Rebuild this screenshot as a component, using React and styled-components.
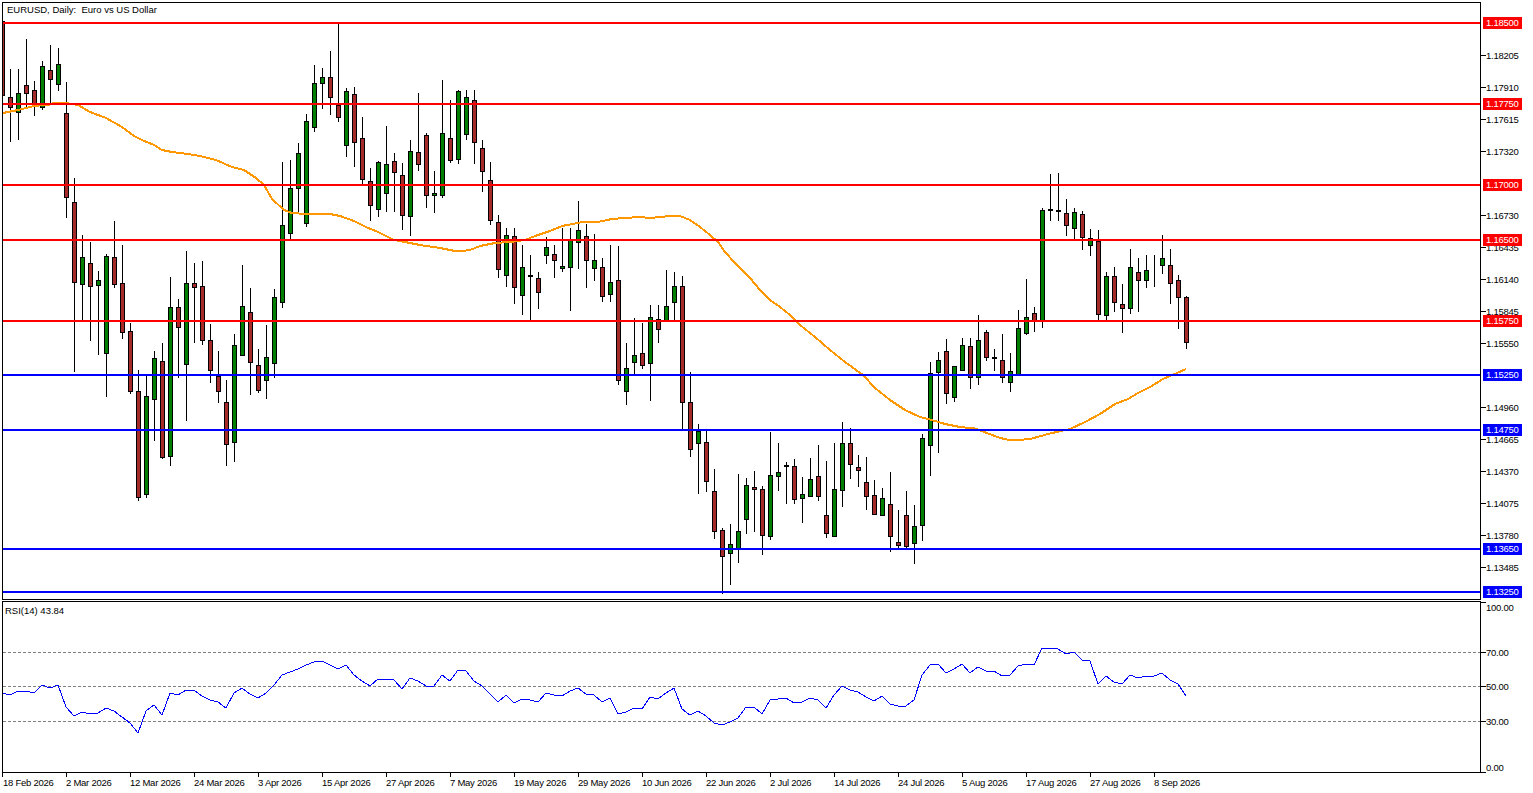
import React from 'react'
import styled, { createGlobalStyle } from 'styled-components'

const GlobalStyle = createGlobalStyle`
  html, body {
    margin: 0;
    padding: 0;
    background: #fff;
  }
`

const Terminal = styled.div`
  width: 1533px;
  height: 793px;
  box-sizing: border-box;
  padding: 2px 0 0 2px;
  overflow: hidden;
  background: #fff;
  color: #000;
  font-family: "Liberation Sans", Arial, sans-serif;
  font-size: 9.5px;
  letter-spacing: -0.25px;
  line-height: 12px;
`

const ChartRow = styled.div`
  display: flex;
  height: ${p => p.$height}px;
  margin-top: ${p => p.$gap || 0}px;
`

const Panel = styled.div`
  position: relative;
  width: 1479px;
  box-sizing: border-box;
  border: 1px solid #000;
  overflow: hidden;
`

const PlotSvg = styled.svg`
  display: block;
  width: 100%;
  height: 100%;
`

const PanelTitle = styled.div`
  position: absolute;
  left: ${p => p.$left}px;
  top: ${p => p.$top}px;
  letter-spacing: 0;
  white-space: pre;
`

const PriceAxis = styled.div`
  position: relative;
  flex: 1;
`

const Tick = styled.div`
  position: absolute;
  left: 0;
  display: flex;
  align-items: center;
  height: 13px;
`

const TickMark = styled.span`
  width: 5px;
  height: 1px;
  background: #000;
`

const TickText = styled.span`
  white-space: nowrap;
  transform: translateY(${p => p.$shift || 0}px);
`

const LevelBadge = styled.div`
  position: absolute;
  left: 2px;
  width: 39px;
  height: 12px;
  box-sizing: border-box;
  padding-left: 3px;
  background: ${p => p.$color};
  color: #fff;
  white-space: nowrap;
`

const TimeAxis = styled.div`
  display: flex;
`

const TimeCell = styled.div`
  flex: none;
  width: 64px;
  padding-top: 4px;
  position: relative;
  white-space: nowrap;

  &::before {
    content: '';
    position: absolute;
    left: 0;
    top: 0;
    width: 1px;
    height: 4px;
    background: #000;
  }
`

const TimeText = styled.span`
  display: block;
  margin-left: ${p => p.$inset || 0}px;
`

// every candle: high, body top, body bottom, low, direction (in chart pixels)
const candles = [
  [21,21,95,95,'r'],[69,97,107,141,'r'],[69,93,112,139,'g'],[39,85,93,106,'r'],[81,90,105,115,'r'],[61,66,107,109,'g'],[45,70,79,104,'r'],[48,64,84,90,'g'],
  [82,113,197,217,'r'],[178,202,282,371,'r'],[235,257,284,320,'g'],[242,263,286,340,'r'],[271,280,285,354,'g'],[254,256,353,396,'g'],[221,257,284,287,'r'],[245,283,332,338,'r'],
  [323,331,391,393,'r'],[370,391,497,500,'r'],[375,396,494,497,'g'],[351,358,399,440,'g'],[343,361,457,458,'r'],[277,307,456,465,'g'],[299,307,327,377,'r'],[251,283,364,420,'g'],
  [263,283,287,342,'r'],[261,286,340,344,'r'],[324,340,370,382,'r'],[351,376,391,402,'r'],[380,402,444,465,'r'],[334,345,442,461,'g'],[265,306,355,355,'g'],[288,312,362,394,'r'],
  [349,365,390,392,'r'],[325,357,380,398,'g'],[289,297,363,377,'g'],[162,225,302,307,'g'],[160,188,233,239,'g'],[143,153,188,211,'g'],[114,121,223,226,'g'],[65,83,127,131,'g'],
  [68,77,83,108,'g'],[51,77,97,114,'r'],[24,105,117,121,'r'],[88,91,145,156,'g'],[87,94,142,166,'r'],[117,138,179,183,'r'],[168,181,205,220,'r'],[161,162,209,216,'g'],
  [126,164,193,211,'g'],[153,161,172,211,'r'],[163,175,215,229,'r'],[140,151,216,235,'g'],[93,152,164,170,'r'],[133,135,195,207,'r'],[171,193,195,212,'g'],[80,133,195,197,'g'],
  [100,138,160,162,'r'],[90,91,159,163,'g'],[90,97,134,139,'g'],[90,100,142,163,'r'],[140,148,171,191,'r'],[162,180,220,224,'r'],[215,222,269,277,'r'],[228,235,275,286,'g'],
  [228,236,287,303,'r'],[245,267,295,314,'g'],[255,275,276,320,'g'],[272,278,292,308,'r'],[237,247,255,263,'g'],[245,254,260,277,'r'],[228,266,268,271,'g'],[228,240,267,310,'g'],
  [201,230,242,268,'g'],[224,236,260,287,'r'],[234,260,268,280,'g'],[258,267,296,301,'r'],[245,282,294,301,'g'],[246,280,380,384,'r'],[343,368,391,404,'g'],[318,355,362,375,'g'],
  [323,353,365,368,'r'],[305,317,363,400,'g'],[305,319,329,342,'r'],[270,306,320,320,'g'],[272,286,302,320,'g'],[276,286,402,428,'r'],[372,402,449,456,'r'],[424,431,443,493,'g'],
  [431,442,481,491,'r'],[469,491,531,538,'r'],[528,530,556,593,'r'],[524,544,553,584,'g'],[474,531,548,562,'g'],[478,485,519,533,'g'],[471,487,489,531,'r'],[486,489,535,554,'r'],
  [432,475,536,539,'g'],[443,472,476,490,'g'],[462,465,466,503,'g'],[459,466,499,503,'r'],[477,494,498,522,'g'],[458,479,496,496,'g'],[445,476,496,500,'r'],[461,515,533,537,'r'],
  [443,489,536,536,'g'],[422,443,490,506,'g'],[428,443,464,478,'r'],[455,467,470,486,'r'],[457,482,496,509,'r'],[480,495,514,514,'r'],[488,498,515,515,'g'],[472,504,536,551,'r'],
  [510,542,545,548,'r'],[491,515,546,548,'r'],[505,526,543,563,'g'],[434,438,525,540,'g'],[362,373,445,475,'g'],[352,360,372,452,'g'],[339,351,393,403,'r'],[366,366,397,401,'g'],
  [338,345,370,370,'g'],[338,346,377,388,'r'],[315,340,377,384,'g'],[330,332,357,360,'r'],[349,357,358,370,'g'],[334,360,377,382,'r'],[353,371,382,391,'g'],[310,328,375,375,'g'],
  [279,317,333,334,'g'],[307,313,321,331,'r'],[208,210,320,327,'g'],[174,209,210,220,'g'],[173,210,211,220,'g'],[199,213,225,235,'r'],[208,212,228,239,'g'],[211,214,237,249,'r'],
  [229,238,245,255,'g'],[230,241,314,319,'r'],[272,276,315,319,'g'],[267,276,302,311,'r'],[284,304,308,332,'r'],[249,267,308,313,'g'],[258,272,280,311,'r'],[255,270,280,287,'g'],
  [255,269,269,286,'g'],[235,258,265,273,'g'],[249,265,283,303,'r'],[275,280,297,328,'r'],[296,297,342,348,'r'],
]

const maLine = [
  [3,113],[18,110],[34,106],[50,104.5],[54,103],[66,103],[78,105],[90,112],[106,118],[122,127],[134,136],[142,140],[154,145],[162,150],[172,152],[188,154],[200,156],[216,160],[232,167],[244,170],
  [256,178],[264,185],[272,199],[284,210],[292,213],[306,214],[330,214],[340,216],[354,221],[366,227],[378,232],[394,240],[400,241],[420,245],[440,248],[455,251],[462,251],[470,250],[480,246],
  [495,243],[510,242],[525,240],[535,236],[550,231],[562,226],[580,222.5],[600,221.5],[612,219],[625,218],[640,217],[650,218],[665,216.5],[672,215.5],[680,216],[690,220],[700,227],[710,235],
  [718,242],[725,252],[735,263],[750,278],[760,290],[770,300],[780,307],[790,315],[800,325],[815,337],[830,350],[845,362],[863,375],[875,388],[890,400],[905,410],[920,417],[930,419.5],[945,424],
  [960,427],[975,428.5],[1000,438],[1012,440.5],[1030,439],[1050,433.5],[1070,429],[1085,422],[1100,414],[1115,404],[1128,399],[1138,393],[1150,387],[1163,379],[1177,373],[1186,369],
]

const rsiValues = [
  693,695,691,691,693,685,688,685,707,716,712,714,713,708,711,717,723,733,711,705,715,693,695,690,690,696,700,702,708,693,688,694,698,693,685,675,672,669,665,662,661,665,669,665,675,681,686,679,679,680,
  689,678,681,686,686,675,681,670,671,681,686,694,702,695,703,699,700,702,693,695,696,691,688,694,695,702,698,714,712,708,709,697,699,693,688,709,715,711,716,723,725,722,718,707,707,714,700,699,698,703,
  702,698,700,708,695,686,690,692,697,701,696,704,706,706,700,675,665,664,673,669,664,673,667,671,671,676,675,666,664,665,648,648,649,654,652,660,661,684,676,682,684,675,678,676,676,673,680,684,696,
]

const levels = [
  { price: 1.185, y: 23, color: '#ff0000' },
  { price: 1.1775, y: 104, color: '#ff0000' },
  { price: 1.17, y: 185, color: '#ff0000' },
  { price: 1.165, y: 240, color: '#ff0000' },
  { price: 1.1575, y: 321, color: '#ff0000' },
  { price: 1.1525, y: 375, color: '#0000ff' },
  { price: 1.1475, y: 430, color: '#0000ff' },
  { price: 1.1365, y: 549, color: '#0000ff' },
  { price: 1.1325, y: 592, color: '#0000ff' },
]

const priceTicks = [1.18205,1.1791,1.17615,1.1732,1.1673,1.16435,1.1614,1.15845,1.1555,1.1496,1.14665,1.1437,1.14075,1.1378,1.13485]
const rsiTicks = [
  { value: 100, y: 602, shift: 5 },
  { value: 70, y: 652 },
  { value: 50, y: 686 },
  { value: 30, y: 721 },
  { value: 0, y: 772, shift: -5 },
]
const dates = ['18 Feb 2026','2 Mar 2026','12 Mar 2026','24 Mar 2026','3 Apr 2026','15 Apr 2026','27 Apr 2026','7 May 2026','19 May 2026','29 May 2026','10 Jun 2026','22 Jun 2026','2 Jul 2026','14 Jul 2026','24 Jul 2026','5 Aug 2026','17 Aug 2026','27 Aug 2026','8 Sep 2026']

const priceY = price => Math.round(23 + (1.185 - price) * 10838)
const candleColor = { g: '#008000', r: '#a52a2a' }

function Candle({ data, index }) {
  const [high, top, bottom, low, dir] = data
  const x = 2 + index * 8
  return (
    <g>
      <path d={`M${x + 0.5} ${high}V${low + 1}`} stroke="#000" />
      <rect x={x - 1.5} y={top + 0.5} width={4} height={bottom - top} fill={candleColor[dir]} stroke="#000" />
    </g>
  )
}

function PriceChart() {
  const ma = maLine.map(p => p.join(',')).join(' ')
  return (
    <PlotSvg viewBox="3 3 1477 596" shapeRendering="crispEdges">
      {candles.map((c, i) => <Candle key={i} data={c} index={i} />)}
      <polyline points={ma} fill="none" stroke="#ff9800" strokeWidth="2" />
      {levels.map(l => (
        <rect key={l.price} x={3} y={l.y - 1} width={1477} height={2} fill={l.color} />
      ))}
    </PlotSvg>
  )
}

function RsiChart() {
  const line = rsiValues.map((y, i) => `${2 + i * 8},${y}`).join(' ')
  return (
    <PlotSvg viewBox="3 602 1477 170" shapeRendering="crispEdges">
      {[652, 686, 721].map(y => (
        <path key={y} d={`M3 ${y + 0.5}H1480`} stroke="#808080" strokeDasharray="3 2" />
      ))}
      <polyline points={line} fill="none" stroke="#0000ff" strokeWidth="1" />
    </PlotSvg>
  )
}

export default function App() {
  return (
    <Terminal>
      <GlobalStyle />
      <ChartRow $height={598}>
        <Panel>
          <PriceChart />
          <PanelTitle $left={4} $top={1}>{'EURUSD, Daily:  Euro vs US Dollar'}</PanelTitle>
        </Panel>
        <PriceAxis>
          {priceTicks.map(p => (
            <Tick key={p} style={{ top: priceY(p) - 8 }}>
              <TickMark />
              <TickText>{p.toFixed(5)}</TickText>
            </Tick>
          ))}
          {levels.map(l => (
            <LevelBadge key={l.price} $color={l.color} style={{ top: l.y - 8 }}>
              {l.price.toFixed(5)}
            </LevelBadge>
          ))}
        </PriceAxis>
      </ChartRow>
      <ChartRow $height={172} $gap={1}>
        <Panel>
          <RsiChart />
          <PanelTitle $left={2} $top={3}>RSI(14) 43.84</PanelTitle>
        </Panel>
        <PriceAxis>
          {rsiTicks.map(t => (
            <Tick key={t.value} style={{ top: t.y - 607 }}>
              <TickMark />
              <TickText $shift={t.shift}>{t.value.toFixed(2)}</TickText>
            </Tick>
          ))}
        </PriceAxis>
      </ChartRow>
      <TimeAxis>
        {dates.map((d, i) => (
          <TimeCell key={d}>
            <TimeText $inset={i === 0 ? 1 : 0}>{d}</TimeText>
          </TimeCell>
        ))}
      </TimeAxis>
    </Terminal>
  )
}
